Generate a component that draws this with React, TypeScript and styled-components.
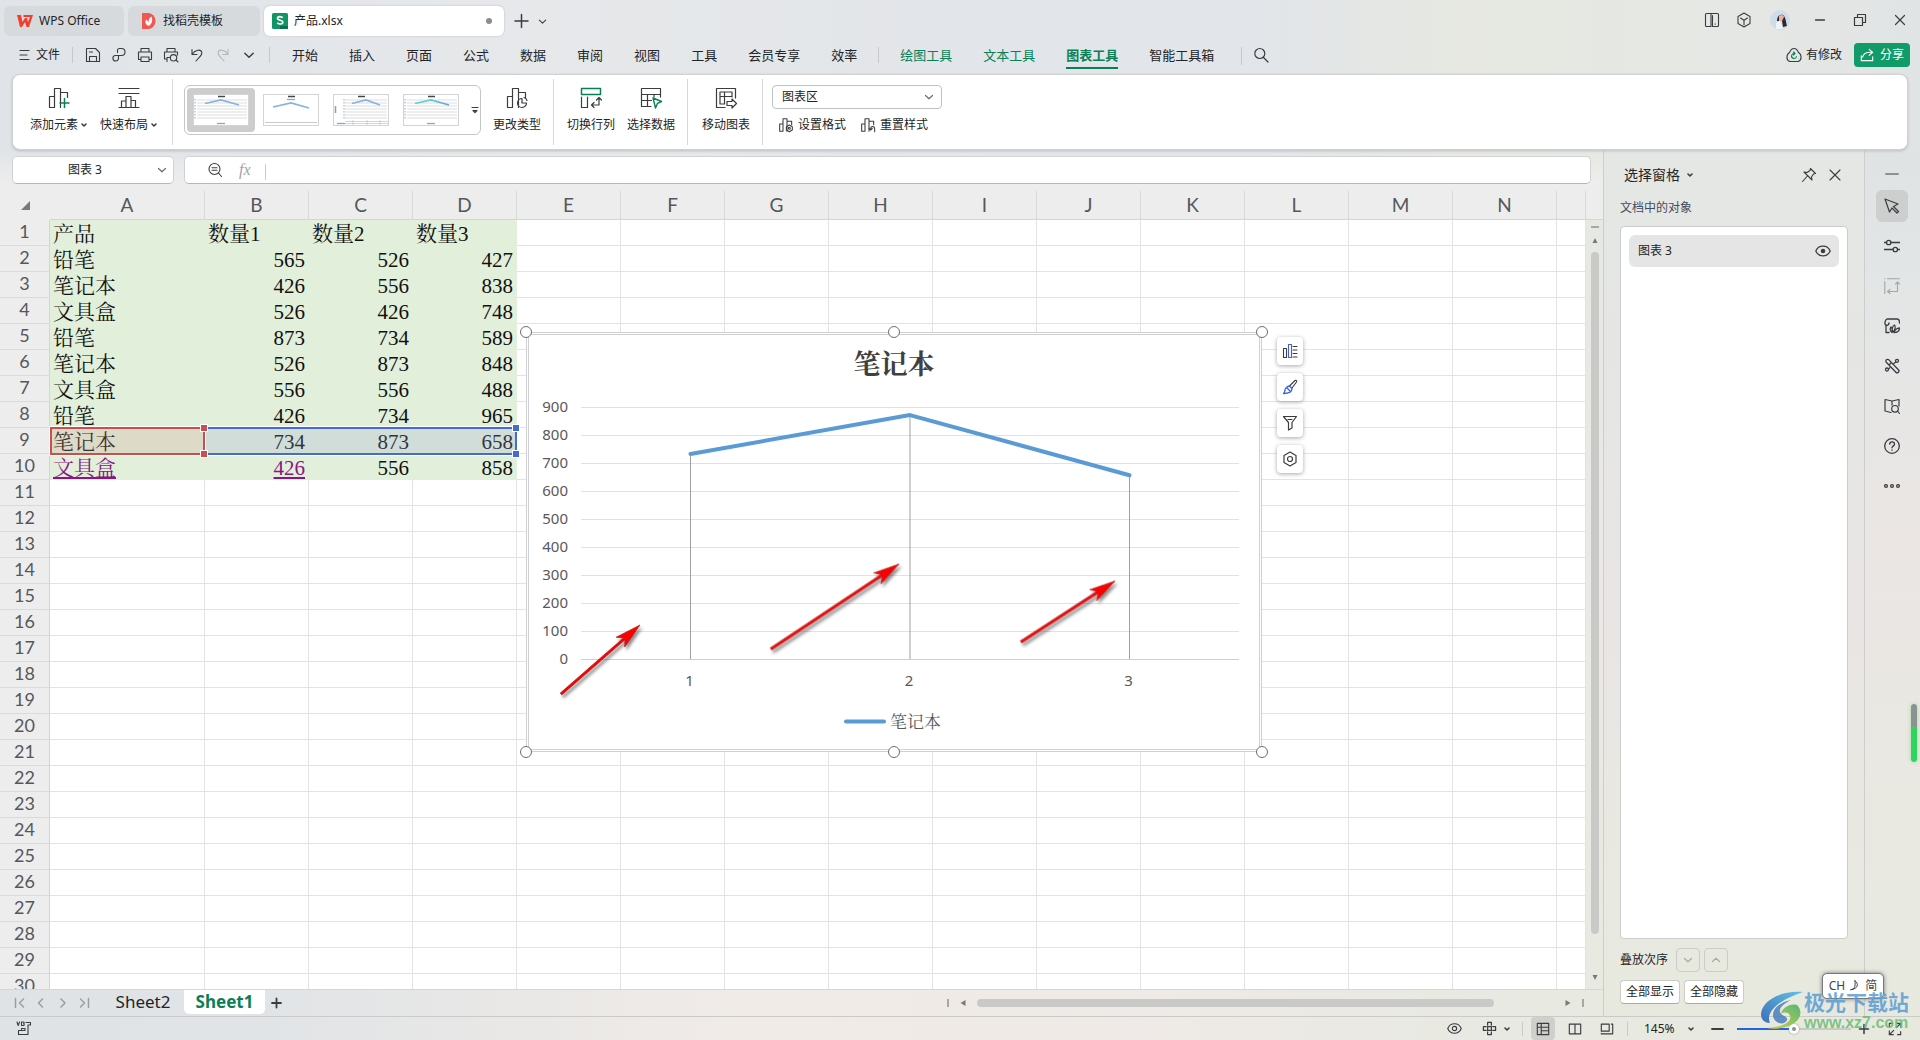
import React from "react";
import styled, { createGlobalStyle, css } from "styled-components";

const ui = `"Noto Sans", "Noto Sans CJK SC", sans-serif`;
const song = `"Liberation Serif", "Noto Serif CJK SC", "Noto Sans CJK SC", serif`;
const green = "#0a7f56";
const ink = "#222426";
const topTint =
  "linear-gradient(90deg, #e0e4e8 0%, #e6e8ea 28%, #e2e5e9 52%, #e2e5e9 66%, #e6e8e1 76%, #e5e8e3 88%, #e1e4e5 100%)";
const bottomTint =
  "linear-gradient(90deg, #dfe3e6 0%, #e1e4e6 14%, #f0ebe7 38%, #f0eae7 55%, #e8e9e2 78%, #e7e9df 100%)";

const GlobalStyle = createGlobalStyle`
  *, *::before, *::after { box-sizing: border-box; }
  body { margin: 0; overflow: hidden; }
  button, input, select { font: inherit; color: inherit; margin: 0; }
  button { background: none; border: 0; padding: 0; }
`;

const Window = styled.div`
  position: relative;
  display: flex;
  flex-direction: column;
  height: 100vh;
  background: ${topTint};
  font: 12px/18px ${ui};
  color: ${ink};
  svg { display: block; flex: none; }
`;

/* ---------- icons ---------- */

interface IconProps {
  size?: number;
  box?: number;
  color?: string;
  stroke?: number;
  children: React.ReactNode;
}
const Icon = ({ size = 16, box = 16, color = "#3a3d40", stroke = 1.1, children }: IconProps) => (
  <svg width={size} height={size} viewBox={`0 0 ${box} ${box}`} fill="none" stroke={color}
    strokeWidth={stroke} strokeLinejoin="round" strokeLinecap="round" aria-hidden="true">
    {children}
  </svg>
);
const Chevron = ({ color = "#6b6e70", size = 10, up = false }: { color?: string; size?: number; up?: boolean }) => (
  <Icon size={size} box={10} color={color} stroke={1.2}>
    <path d={up ? "M1.5 6.5 5 3.2l3.5 3.3" : "M1.5 3.5 5 6.8l3.5-3.3"} />
  </Icon>
);
const Caret = () => (
  <Icon size={8} box={8} stroke={1.6}>
    <path d="M2 3 4 5 6 3" />
  </Icon>
);

/* ---------- title bar ---------- */

const TitleBar = styled.header`
  display: flex;
  flex: none;
  height: 40px;
  padding: 6px 0 0 4px;
`;
const TabStrip = styled.div`
  display: flex;
  gap: 4px;
  flex: 1;
`;
const DocTab = styled.button<{ $width: number; $active?: boolean }>`
  display: flex;
  align-items: center;
  gap: 6px;
  width: ${(p) => p.$width}px;
  height: 30px;
  padding: 0 12px 0 ${(p) => (p.$active ? 8 : 13)}px;
  border-radius: 6px;
  background: ${(p) => (p.$active ? "#fff" : "#d6dadd")};
  box-shadow: ${(p) => (p.$active ? "0 0 2px #b4b8bc" : "none")};
`;
const UnsavedDot = styled.span`
  width: 6px;
  height: 6px;
  margin-left: auto;
  border-radius: 50%;
  background: #8b8d90;
`;
const PlainButton = styled.button<{ $w?: number; $h?: number }>`
  display: flex;
  align-items: center;
  justify-content: center;
  flex: none;
  width: ${(p) => p.$w ?? 26}px;
  height: ${(p) => p.$h ?? 28}px;
`;

/* ---------- menu row ---------- */

const MenuRow = styled.nav`
  display: flex;
  flex: none;
  align-items: flex-start;
  height: 34px;
  padding: 3px 10px 0 16px;
`;
const FileButton = styled.button`
  display: flex;
  align-items: center;
  gap: 6px;
  height: 24px;
  padding-left: 2px;
`;
const Divider = styled.span<{ $l: number; $r: number; $h?: number }>`
  flex: none;
  width: 1px;
  height: ${(p) => p.$h ?? 16}px;
  margin: 4px ${(p) => p.$r}px 0 ${(p) => p.$l}px;
  background: #c5c9cb;
`;
const MenuGroup = styled.div`
  display: flex;
  gap: 31px;
`;
const MenuItem = styled.button<{ $green?: boolean; $active?: boolean }>`
  height: 26px;
  border-bottom: 2px solid transparent;
  font-size: 13px;
  line-height: 24px;
  white-space: nowrap;
  color: ${(p) => (p.$green || p.$active ? green : ink)};
  ${(p) => p.$active && css`font-weight: 700; border-bottom-color: ${green};`}
`;
const MenuEnd = styled.div`
  display: flex;
  align-items: center;
  gap: 12px;
  margin-left: auto;
`;
const StateButton = styled.button`
  display: flex;
  align-items: center;
  gap: 4px;
`;
const ShareButton = styled(StateButton)`
  gap: 6px;
  height: 24px;
  padding: 0 6px;
  border-radius: 4px;
  background: #109b69;
  color: #fff;
`;

/* ---------- ribbon ---------- */

const Ribbon = styled.section`
  display: flex;
  flex: none;
  align-items: flex-start;
  height: 76px;
  margin: 0 12px;
  padding-left: 15px;
  border: 1px solid #cfd2d3;
  border-radius: 8px;
  background: #fff;
  box-shadow: 0 1px 3px #b9bdbe;
  position: relative;
`;
const RibbonButton = styled.button<{ $w?: number }>`
  display: flex;
  flex-direction: column;
  align-items: center;
  gap: 6px;
  width: ${(p) => p.$w ?? 48}px;
  padding-top: 11px;
  white-space: nowrap;
`;
const RibbonLabel = styled.span`
  display: flex;
  align-items: center;
  gap: 2px;
`;
const RibbonGroup = styled.div<{ $gap: number; $l: number }>`
  display: flex;
  gap: ${(p) => p.$gap}px;
  padding-left: ${(p) => p.$l}px;
`;
const RibbonDivider = styled.span`
  width: 1px;
  height: 66px;
  margin: 4px 0 0 12px;
  background: #d6d7d8;
`;
const Gallery = styled.div`
  display: flex;
  gap: 2px;
  width: 297px;
  height: 50px;
  margin: 10px 0 0;
  padding: 2px;
  border: 1px solid #c3c5c6;
  border-radius: 6px;
`;
const Thumb = styled.button<{ $active?: boolean }>`
  display: grid;
  place-items: center;
  flex: none;
  width: 68px;
  height: 44px;
  border-radius: 4px;
  background: ${(p) => (p.$active ? "#cdcdcd" : "transparent")};
`;
const FormatTools = styled.div`
  display: flex;
  flex-direction: column;
  gap: 7px;
  padding: 10px 0 0 9px;
`;
const SelectWrap = styled.label`
  display: flex;
  align-items: center;
  width: 170px;
  height: 24px;
  padding-right: 7px;
  border: 1px solid #bfc1c2;
  border-radius: 4px;
  select {
    flex: 1;
    appearance: none;
    border: 0;
    background: none;
    padding: 0 9px;
    outline: 0;
  }
`;
const SmallTools = styled.div`
  display: flex;
  gap: 14px;
  padding-left: 6px;
`;

/* ---------- work area ---------- */

const Main = styled.main`
  display: flex;
  flex: 1;
  min-height: 0;
`;
const Book = styled.div`
  display: flex;
  flex-direction: column;
  flex: 1;
  min-width: 0;
`;
const FormulaRow = styled.div`
  display: flex;
  flex: none;
  gap: 10px;
  height: 41px;
  padding: 6px 12px 7px;
  background: linear-gradient(180deg, #ededed00 0%, #ededed 80%);
`;
const Field = styled.div<{ $w?: number }>`
  display: flex;
  align-items: center;
  ${(p) => (p.$w ? css`width: ${p.$w}px;` : css`flex: 1;`)}
  padding: 0 6px 0 ${(p) => (p.$w ? 0 : 17)}px;
  border: 1px solid #d0d3d3;
  border-bottom-color: #b5b8b8;
  border-radius: 5px;
  background: #fff;
  input {
    flex: 1;
    min-width: 0;
    border: 0;
    outline: 0;
    background: none;
    text-align: ${(p) => (p.$w ? "center" : "left")};
  }
`;
const Fx = styled.span`
  margin-left: 11px;
  font: italic 16px/18px "Liberation Serif", serif;
  color: #a2a4a6;
`;
const SheetArea = styled.div`
  display: flex;
  flex: 1;
  min-height: 0;
  background: #ededed;
  border-bottom: 1px solid #d5d7d7;
`;
const Canvas = styled.div`
  position: relative;
  flex: 1;
  min-width: 0;
  overflow: hidden;
`;
const Grid = styled.table`
  width: 100%;
  table-layout: fixed;
  border-collapse: separate;
  border-spacing: 0;
  background: #fff;
`;
const HeadCell = styled.th`
  height: 29px;
  padding: 0 0 1px;
  border-right: 1px solid #d9d9d9;
  border-bottom: 1px solid #d4d4d4;
  background: #ededed;
  font: 400 19px/26px Lato, sans-serif;
  color: #55585b;
`;
const Corner = styled(HeadCell)`
  border-right-color: #ededed;
  border-bottom-color: #ededed;
  svg { margin: 0 0 0 21px; }
`;
const RowHead = styled(HeadCell)`
  height: 26px;
  padding: 0 0 3px;
  border-right-color: #d4d4d4;
  border-bottom-color: #dadada;
  font-size: 18px;
  line-height: 22px;
`;
const Cell = styled.td<{ $filled?: boolean; $num?: boolean }>`
  height: 26px;
  padding: 4px 3px 0;
  border-right: 1px solid #e3e3e3;
  border-bottom: 1px solid #e3e3e3;
  font: 21px/21px ${song};
  color: #111;
  overflow: hidden;
  white-space: nowrap;
  text-align: ${(p) => (p.$num ? "right" : "left")};
  ${(p) => p.$filled && css`background: #e2efda; border-color: #e2efda;`}
  a {
    color: #8a1583;
    text-decoration: underline 2px;
    text-underline-offset: 2px;
  }
`;
const RangeBox = styled.div<{ $x: number; $w: number; $color: string; $tint: string }>`
  position: absolute;
  left: ${(p) => p.$x}px;
  top: 236px;
  width: ${(p) => p.$w}px;
  height: 28px;
  border: 2px solid ${(p) => p.$color};
  outline: 1px solid #fff;
  background: ${(p) => p.$tint};
  color: ${(p) => p.$color};
`;
const Grip = styled.i<{ $bottom?: boolean }>`
  position: absolute;
  width: 6px;
  height: 6px;
  right: -4px;
  ${(p) => (p.$bottom ? "bottom: -4px;" : "top: -4px;")}
  background: currentColor;
  outline: 1px solid #fff;
`;
const ChartFrame = styled.figure`
  position: absolute;
  left: 526px;
  top: 141px;
  width: 736px;
  height: 420px;
  margin: 0;
  background: #fff;
`;
const Handle = styled.i<{ $x: number; $y: number }>`
  position: absolute;
  left: ${(p) => p.$x}%;
  top: ${(p) => p.$y}%;
  width: 12px;
  height: 12px;
  margin: -6px;
  border: 1px solid #6c6e70;
  border-radius: 50%;
  background: #fff;
`;
const ChartTools = styled.div`
  position: absolute;
  left: 1277px;
  top: 146px;
  display: flex;
  flex-direction: column;
  gap: 8px;
`;
const ChartTool = styled(PlainButton)`
  border-radius: 4px;
  background: #fff;
  box-shadow: 0 1px 4px #a5a7aa;
`;
const VScroll = styled.div`
  display: flex;
  flex-direction: column;
  align-items: center;
  flex: none;
  width: 17px;
  margin-top: 28px;
  padding: 6px 0 7px;
  gap: 8px;
  border-top: 1px solid #d5d7d7;
  background: linear-gradient(180deg, #e6e8e2, #ebe9e5 50%, #e8e9e1);
`;
const Thumbbar = styled.span<{ $vertical?: boolean }>`
  flex: 1;
  border-radius: 4px;
  background: #c9cac8;
  ${(p) => (p.$vertical ? css`width: 8px; margin-bottom: 32px;` : css`height: 8px; margin-right: 60px;`)}
`;

/* ---------- sheet tabs ---------- */

const SheetBar = styled.div`
  display: flex;
  flex: none;
  height: 26px;
  padding-left: 8px;
  background: ${bottomTint};
  background-size: 100vw 100%;
`;
const SheetNav = styled.div`
  display: flex;
  padding-right: 6px;
`;
const SheetTab = styled.button<{ $active?: boolean }>`
  width: ${(p) => (p.$active ? 81 : 82)}px;
  height: 24px;
  border-radius: 0 0 5px 5px;
  font-size: 17px;
  line-height: 22px;
  ${(p) => p.$active && css`background: #fff; color: ${green}; font-weight: 700;`}
`;
const NavButton = styled(PlainButton)`
  width: 22px;
  height: 26px;
`;
const HScroll = styled.div`
  display: flex;
  align-items: center;
  gap: 10px;
  max-width: 656px;
  margin-left: auto;
  padding-right: 19px;
  flex: 1;
`;

/* ---------- selection pane ---------- */

const Pane = styled.aside`
  display: flex;
  flex-direction: column;
  flex: none;
  width: 261px;
  padding: 6px 16px 12px;
  border-left: 1px solid #cbcecd;
  background: linear-gradient(180deg, #e4e7e4 0%, #e6e6e4 35%, #e9e5e4 55%, #e8e9e1 85%, #e7e9df 100%);
`;
const PaneTitle = styled.div`
  display: flex;
  align-items: center;
  height: 38px;
  padding-left: 4px;
  h2 { margin: 0 6px 0 0; font: 400 14px/20px ${ui}; }
  button:first-of-type { margin-left: auto; }
`;
const PaneLabel = styled.div`
  color: #454a60;
  line-height: 28px;
`;
const ObjectList = styled.ul`
  flex: 1;
  margin: 4px 0 9px;
  padding: 8px;
  list-style: none;
  border: 1px solid #c9cdcd;
  border-radius: 4px;
  background: #fff;
`;
const ObjectItem = styled.li`
  display: flex;
  align-items: center;
  justify-content: space-between;
  height: 32px;
  padding: 0 8px 0 9px;
  border-radius: 6px;
  background: #e5e5e5;
`;
const PaneRow = styled.div`
  display: flex;
  align-items: center;
  gap: 4px;
  height: 24px;
  & + & { margin-top: 8px; }
`;
const OrderLabel = styled.span`
  width: 52px;
`;
const OrderButton = styled(PlainButton)`
  width: 24px;
  height: 24px;
  border: 1px solid #cbccc7;
  border-radius: 4px;
`;
const WhiteButton = styled.button`
  width: 60px;
  height: 24px;
  border: 1px solid #cbccc8;
  border-bottom-color: #aaaba7;
  border-radius: 4px;
  background: #fff;
`;
const Rail = styled.aside`
  flex: none;
  width: 56px;
  padding: 8px 12px 0 11px;
  border-left: 1px solid #cbcecd;
  background: linear-gradient(180deg, #dfe3e4 0%, #e4e6e6 20%, #ebe6e4 45%, #e8e9e1 85%, #e7e9df 100%);
`;
const RailButton = styled(PlainButton)<{ $on?: boolean; $tight?: boolean }>`
  width: 32px;
  height: 32px;
  margin-bottom: ${(p) => (p.$tight ? 0 : 8)}px;
  border-radius: 6px;
  background: ${(p) => (p.$on ? "#cdcfce" : "transparent")};
`;

/* ---------- status bar ---------- */

const StatusBar = styled.footer`
  display: flex;
  flex: none;
  align-items: center;
  justify-content: space-between;
  height: 24px;
  padding-left: 16px;
  border-top: 1px solid #c9cbcb;
  background: ${bottomTint};
`;
const StatusGroup = styled.div`
  display: flex;
  align-items: center;
`;
const EyeCare = styled(PlainButton)`
  gap: 6px;
  width: 52px;
  height: 22px;
`;
const ViewButton = styled(PlainButton)<{ $on?: boolean }>`
  width: 24px;
  height: 23px;
  border-radius: 4px;
  margin-right: 8px;
  background: ${(p) => (p.$on ? "#cfd0cb" : "transparent")};
`;
const StatusDivider = styled.span`
  width: 1px;
  height: 14px;
  background: #c8cac6;
  margin-right: 8px;
`;
const ZoomLabel = styled.label`
  width: 42px;
  padding-left: 8px;
`;
const ZoomRange = styled.input`
  width: 114px;
  height: 12px;
  margin: 0 7px;
  appearance: none;
  background: transparent;
  &::-webkit-slider-runnable-track {
    height: 2px;
    background: linear-gradient(90deg, #2463e0 50%, #c6c9c4 50%);
  }
  &::-webkit-slider-thumb {
    appearance: none;
    width: 10px;
    height: 10px;
    margin-top: -4px;
    border: 3px solid #fff;
    border-radius: 50%;
    background: #8c9092;
    box-shadow: 0 0 2px #888;
  }
`;

/* ---------- overlays ---------- */

const ImeBox = styled.div`
  position: absolute;
  right: 36px;
  bottom: 41px;
  display: flex;
  align-items: center;
  justify-content: center;
  gap: 4px;
  width: 62px;
  height: 26px;
  border: 1px solid #77797a;
  border-radius: 5px;
  background: #fff;
  box-shadow: 0 0 4px #777;
  color: #444;
`;
const Watermark = styled.div`
  position: absolute;
  right: 10px;
  bottom: 9px;
  display: flex;
  align-items: flex-end;
  gap: 1px;
  pointer-events: none;
`;
const MarkText = styled.div`
  display: flex;
  flex-direction: column;
  width: 106px;
  white-space: nowrap;
  b { font: 700 21px/26px ${ui}; color: #5b9cd3d9; }
  span { font: 700 16px/16px "Liberation Sans", sans-serif; color: #69bd74d9; }
`;
const Meter = styled.div`
  position: absolute;
  right: 3px;
  top: 704px;
  width: 6px;
  height: 58px;
  border-radius: 3px;
  background: linear-gradient(180deg, #8d9291 0 40%, #2fd45f 40% 100%);
  box-shadow: 0 0 4px #9adca9;
`;

/* ---------- data ---------- */

const columns = "ABCDEFGHIJKLMN".split("");
const records: (string | number)[][] = [
  ["产品", "数量1", "数量2", "数量3"],
  ["铅笔", 565, 526, 427],
  ["笔记本", 426, 556, 838],
  ["文具盒", 526, 426, 748],
  ["铅笔", 873, 734, 589],
  ["笔记本", 526, 873, 848],
  ["文具盒", 556, 556, 488],
  ["铅笔", 426, 734, 965],
  ["笔记本", 734, 873, 658],
  ["文具盒", 426, 556, 858],
];
const mainMenus = ["开始", "插入", "页面", "公式", "数据", "审阅", "视图", "工具", "会员专享", "效率"];
const toolMenus = ["绘图工具", "文本工具", "图表工具", "智能工具箱"];

const bars = <path d="M2.500 10.500h5v11h-5zM7.500 21.500v-19h6v19M13.500 6.500h7v5" />;

const ThumbChart = ({ kind }: { kind: number }) => (
  <svg width="56" height="32" viewBox="0 0 56 32" fill="none" aria-hidden="true">
    <rect x=".5" y=".5" width="55" height="31" fill="#fff" stroke="#d4d4d4" />
    <path d="M25 2.500h7" stroke="#444" strokeWidth="1.500" />
    {kind !== 1 && [6, 9, 12, 15, 18, 21, 24].map((y) => (
      <path key={y} d={`M${kind === 2 ? 12 : 4} ${y}H54`} stroke="#eeeeef" strokeWidth="2" />
    ))}
    {kind !== 1 && <path d={`M${kind === 2 ? 11 : 2} 5v21`} stroke="#8faad0" strokeDasharray="1.500 1.500" />}
    {kind === 1 && <path d="M2 28.500h52" stroke="#c8c8c8" />}
    {kind === 2 && <path d="M2.500 12v7" stroke="#99a" strokeWidth="1.500" />}
    {kind === 2 && <path d="M12 27.500h43M12 29.500h43M20 26v5M34 26v5M47 26v5" stroke="#bbb" strokeWidth=".6" />}
    <path d={kind === 1 ? "M10 13 28 9l18 5" : kind === 2 ? "M19 9.500 33 6l14 5" : "M12 9.500 28 6l18 5"}
      stroke={kind === 3 ? "url(#tealBlue)" : "#86b4e0"} strokeWidth="1.700" />
    <path d={kind === 1 ? "M24 5.500h8" : kind === 2 ? "M4 29.500h8" : "M24 29.500h8"} stroke="#7da7d5" strokeWidth="1.300" />
    <defs>
      <linearGradient id="tealBlue"><stop offset=".4" stopColor="#5fd0d0" /><stop offset="1" stopColor="#6aa0dd" /></linearGradient>
    </defs>
  </svg>
);

const Arrow = ({ x1, y1, x2, y2 }: { x1: number; y1: number; x2: number; y2: number }) => {
  const angle = (Math.atan2(y2 - y1, x2 - x1) * 180) / Math.PI;
  const length = Math.hypot(x2 - x1, y2 - y1);
  return (
    <g transform={`translate(${x1} ${y1}) rotate(${angle})`} stroke="#a01818" strokeWidth=".6" fill="#fb0404">
      <path d={`M0 -1.200H${length - 21}L${length - 26} -6.500 ${length} 0 ${length - 26} 6.500 ${length - 21} 1.200H0z`} />
    </g>
  );
};

const LineChart = () => {
  const values = [734, 873, 658];
  const y = (v: number) => 327.5 - (v * 252) / 900;
  const x = (i: number) => 164.5 + i * 219.5;
  return (
    <svg width="736" height="420" viewBox="0 0 736 420" role="img" aria-label="笔记本">
      <defs>
        <filter id="shade" x="-20%" y="-20%" width="150%" height="150%">
          <feDropShadow dx="2" dy="3" stdDeviation="1.500" floodColor="#333" floodOpacity=".55" />
        </filter>
      </defs>
      <path d="M.5.500h735v419H.5zM2.500 2.500h731v415H2.500z" fill="none" stroke="#cfd0d3" />
      <text x="368" y="42" textAnchor="middle" fontFamily={song} fontWeight="700" fontSize="27" fill="#404040">笔记本</text>
      <g fontFamily={ui} fontSize="15" fill="#595959">
        {Array.from({ length: 10 }, (_, i) => (
          <React.Fragment key={i}>
            <path d={`M55 ${327.5 - i * 28}H713`} stroke={i ? "#e1e1e1" : "#cfcfcf"} />
            <text x="42" y={332 - i * 28} textAnchor="end">{i * 100}</text>
          </React.Fragment>
        ))}
        {values.map((v, i) => (
          <React.Fragment key={i}>
            <path d={`M${x(i)} ${y(v)}V327`} stroke="#a0a0a0" />
            <text x={x(i) - 1} y="354" textAnchor="middle">{i + 1}</text>
          </React.Fragment>
        ))}
      </g>
      <polyline points={values.map((v, i) => `${x(i)},${y(v)}`).join(" ")} fill="none" stroke="#5b9bd5" strokeWidth="4" strokeLinecap="round" strokeLinejoin="round" />
      <path d="M320 389.500H358" stroke="#5b9bd5" strokeWidth="4" strokeLinecap="round" />
      <text x="364" y="396" fontFamily={song} fontSize="17" fill="#595959">笔记本</text>
      <g filter="url(#shade)">
        <Arrow x1={35} y1={362} x2={114} y2={293} />
        <Arrow x1={245} y1={317} x2={373} y2={232} />
        <Arrow x1={495} y1={310} x2={589} y2={249} />
      </g>
    </svg>
  );
};

const Worksheet = () => (
  <Grid>
    <colgroup>
      <col style={{ width: 50 }} />
      <col style={{ width: 155 }} />
      {columns.slice(1).map((c) => <col key={c} style={{ width: 104 }} />)}
      <col />
    </colgroup>
    <thead>
      <tr>
        <Corner aria-label="全选"><svg width="9" height="10"><path d="M0 10 9 1v9z" fill="#77797b" /></svg></Corner>
        {columns.map((c) => <HeadCell key={c} scope="col">{c}</HeadCell>)}
        <HeadCell />
      </tr>
    </thead>
    <tbody>
      {Array.from({ length: 30 }, (_, r) => (
        <tr key={r}>
          <RowHead scope="row">{r + 1}</RowHead>
          {Array.from({ length: columns.length + 1 }, (_, c) => {
            const value = records[r]?.[c];
            const linked = r === 9 && c < 2;
            return (
              <Cell key={c} $filled={value !== undefined} $num={typeof value === "number"}>
                {linked ? <a href="#sheet">{value}</a> : value}
              </Cell>
            );
          })}
        </tr>
      ))}
    </tbody>
  </Grid>
);

const Tri = ({ d }: { d: string }) => (
  <svg width="8" height="8" viewBox="0 0 8 8" aria-hidden="true"><path d={d} fill="#77797b" /></svg>
);

export default function App() {
  return (
    <Window>
      <GlobalStyle />
      <TitleBar>
        <TabStrip>
          <DocTab $width={120}>
            <svg width="16" height="14" viewBox="0 0 16 14" fill="none" aria-hidden="true">
              <path d="M0 1h4l1.500 7L8 4h2l1 4 2-5H6.500V1H16l-4 12h-2.500L8 8l-3 5H3z" fill="#f0402f" />
            </svg>
            WPS Office
          </DocTab>
          <DocTab $width={132}>
            <svg width="16" height="16" viewBox="0 0 16 16" aria-hidden="true">
              <path d="M1 0h6a7.500 8 0 0 1 0 16H1z" fill="#f15653" />
              <path d="M7.500 13C4 11 4 9 5 6.500 7 8 7.500 9 7.500 10c0-3 .5-5 3-6.500C12 8 11 11 7.500 13z" fill="#fff" />
            </svg>
            找稻壳模板
          </DocTab>
          <DocTab $width={240} $active>
            <svg width="16" height="16" viewBox="0 0 16 16" aria-hidden="true">
              <rect width="16" height="16" rx="1.500" fill="#119566" />
              <path d="M8 13h8v3H8z" fill="#0b6f4b" />
              <path d="M10.800 4.800C9.500 3.200 5.500 3 5.500 5.300c0 2.500 5.300 1.500 5.300 4 0 2.200-4 2.200-5.500.4" fill="none" stroke="#fff" strokeWidth="1.700" />
            </svg>
            产品.xlsx
            <UnsavedDot />
          </DocTab>
          <PlainButton aria-label="新建" $h={30}><Icon stroke={1.500}><path d="M8.500 1.500v13M2 8h13" /></Icon></PlainButton>
          <PlainButton aria-label="更多标签" $w={8} $h={30}><Chevron size={9} color="#3a3d40" /></PlainButton>
        </TabStrip>
        <PlainButton aria-label="分屏" $w={32}><Icon><path d="M2.500 1.500H7v13H2.500a1 1 0 0 1-1-1v-11a1 1 0 0 1 1-1M8.500 3.500v11h5a1 1 0 0 0 1-1v-11a1 1 0 0 0-1-1H7M11 12h.5" /></Icon></PlainButton>
        <PlainButton aria-label="应用" $w={32}><Icon><path d="M8 1l6 3.500v7L8 15l-6-3.500v-7zM4.500 6 8 8.200 11.500 6M8 8.200V13" /></Icon></PlainButton>
        <PlainButton aria-label="账户" $w={40}>
          <svg width="20" height="20" viewBox="0 0 20 20" aria-hidden="true">
            <circle cx="10" cy="10" r="10" fill="#cfdde8" />
            <path d="M7 11c0-5 3-7 6-6 3 2 3 8 4 11l-4 1-1-6z" fill="#33272d" />
            <path d="M9 6c2-2 5-1 5 1l-2 4H9z" fill="#e3b3a9" /><path d="M6 13l4-2 3 8H6z" fill="#eef4f9" />
          </svg>
        </PlainButton>
        <PlainButton aria-label="最小化" $w={40}><Icon stroke={1.300}><path d="M3.500 8h9" /></Icon></PlainButton>
        <PlainButton aria-label="还原" $w={40}><Icon stroke={1.200}><path d="M2.500 5.500h8v8h-8zM5.500 5.500v-3h8v8h-3" /></Icon></PlainButton>
        <PlainButton aria-label="关闭" $w={40}><Icon stroke={1.200}><path d="m3.500 3.500 9 9m0-9-9 9" /></Icon></PlainButton>
      </TitleBar>

      <MenuRow>
        <FileButton>
          <Icon size={12} box={12}><path d="M2 1.500h9M2 6h7M2 10.500h9" /></Icon>
          文件
        </FileButton>
        <Divider $l={12} $r={7} />
        <PlainButton aria-label="保存" $h={24}><Icon><path d="M1.500 1.500h9l4 4v9h-13zM4.500 5h3M4.500 14.500v-5h7v5" /></Icon></PlainButton>
        <PlainButton aria-label="输出" $h={24}><Icon><path d="M6.500 5.500v-2a2 2 0 0 1 2-2h2a3.500 3.500 0 0 1 0 7H4a2.800 2.800 0 1 0 3.500 3V8.500" /></Icon></PlainButton>
        <PlainButton aria-label="打印" $h={24}><Icon><path d="M4 5V1.500h8V5M4 12.500H1.500V5h13v7.500H12M4 10h8v4.500H4z" /></Icon></PlainButton>
        <PlainButton aria-label="打印预览" $h={24}><Icon><path d="M4 5V1.500h8V5M4 14.500v-4h3M4 12H1.500V5h13v3" /><circle cx="10.500" cy="10.800" r="3.200" /><path d="m13 13 2 2" /></Icon></PlainButton>
        <PlainButton aria-label="撤销" $h={24}><Icon><path d="M3 2.500v5h5M3.300 7C6 3 12 1.500 12.800 5.500c.5 3-3 5-5.800 8.500" /></Icon></PlainButton>
        <PlainButton aria-label="恢复" $h={24}><Icon color="#b3b6b9"><path d="M13 2.500v5H8M12.700 7C10 3 4 1.500 3.200 5.500c-.5 3 3 5 5.800 8.500" /></Icon></PlainButton>
        <PlainButton aria-label="更多命令" $h={24}><Chevron size={12} color="#3a3d40" /></PlainButton>
        <Divider $l={7} $r={22} />
        <MenuGroup>{mainMenus.map((m) => <MenuItem key={m}>{m}</MenuItem>)}</MenuGroup>
        <Divider $l={21} $r={21} />
        <MenuGroup>
          {toolMenus.map((m, i) => <MenuItem key={m} $green={i < 3} $active={i === 2}>{m}</MenuItem>)}
        </MenuGroup>
        <Divider $l={27} $r={6} $h={18} />
        <PlainButton aria-label="搜索" $h={24}><Icon stroke={1.200}><circle cx="6.800" cy="6.500" r="5" /><path d="m10.500 10.500 4.500 4.500" /></Icon></PlainButton>
        <MenuEnd>
          <StateButton>
            <Icon><path d="M8 1.500c2 0 3.500 1.500 4.500 4 3.500 2 3.500 8-.5 9H4c-4-1-4-7-.5-9 1-2.500 2.500-4 4.500-4z" /><path d="M10.500 9.500a2.500 2.500 0 1 1-2-3M7.500 5l1.500 1.500L7.500 8" stroke={green} /></Icon>
            有修改
          </StateButton>
          <ShareButton>
            <Icon size={14} color="#fff" stroke={1.300}><path d="M1.500 9v5.500h13V10M10.500 1.500l4 3.500-4 3.500M14 5C8 4.500 4 6 3 10.500" /></Icon>
            分享
          </ShareButton>
        </MenuEnd>
      </MenuRow>

      <Ribbon>
        <RibbonGroup $gap={8} $l={0}>
          <RibbonButton $w={62}>
            <Icon size={24} box={24} stroke={1.200}>{bars}<path d="M17.500 12.500v9M13 17h9" stroke={green} strokeWidth="1.500" /></Icon>
            <RibbonLabel>添加元素<Caret /></RibbonLabel>
          </RibbonButton>
          <RibbonButton $w={62}>
            <Icon size={24} box={24} stroke={1.200}><path d="M2 2.500h20M2 7.500h20M2 21.500h20M4.500 21v-6H9v6M9 15v-4.500h5V21M14 14.500h4.500V21" /></Icon>
            <RibbonLabel>快速布局<Caret /></RibbonLabel>
          </RibbonButton>
        </RibbonGroup>
        <RibbonDivider />
        <RibbonGroup $gap={12} $l={11}>
          <Gallery>
            {[0, 1, 2, 3].map((k) => (
              <Thumb key={k} $active={k === 0} aria-label={`样式 ${k + 1}`}><ThumbChart kind={k} /></Thumb>
            ))}
            <PlainButton aria-label="更多样式" $w={16} $h={44}><Icon size={8} box={8} stroke={1.200}><path d="M1 1.500h6M2 4.500h4L4 6.500z" /></Icon></PlainButton>
          </Gallery>
          <RibbonButton>
            <Icon size={24} box={24} stroke={1.200}>{bars}<path d="M17 12.500a4.500 4.500 0 1 0 4.500 4.500H17zM19 11.500a4 4 0 0 1 3 3" /></Icon>
            <RibbonLabel>更改类型</RibbonLabel>
          </RibbonButton>
        </RibbonGroup>
        <RibbonDivider />
        <RibbonGroup $gap={12} $l={13}>
          <RibbonButton>
            <Icon size={24} box={24} stroke={1.200}><path d="M2.500 2.500h19v6h-19z" stroke={green} strokeWidth="1.500" /><path d="M2.500 11v10.500h6V11M13 19h7v-7M17.500 14 20 11.500l2.500 2.500M15 16.500 12.500 19l2.500 2.500" /></Icon>
            <RibbonLabel>切换行列</RibbonLabel>
          </RibbonButton>
          <RibbonButton>
            <Icon size={24} box={24} stroke={1.200}><path d="M12 20.500H2.500v-18h19V11M2.500 8.500h19M2.500 14.500h10M8.500 8.500v12M15 8.500V11" /><path d="m14 12 8.500 3.500-4 1.800L16.500 22z" stroke={green} strokeWidth="1.400" /></Icon>
            <RibbonLabel>选择数据</RibbonLabel>
          </RibbonButton>
        </RibbonGroup>
        <RibbonDivider />
        <RibbonGroup $gap={12} $l={14}>
          <RibbonButton>
            <Icon size={24} box={24} stroke={1.200}><path d="M11 21.500H2.500v-19h19V12M6 18V6h12v5M6 10.500h12M10.500 6v12H6M13 15.500h5V13l4.500 4.500L18 22v-2.500h-5z" /></Icon>
            <RibbonLabel>移动图表</RibbonLabel>
          </RibbonButton>
        </RibbonGroup>
        <RibbonDivider />
        <FormatTools>
          <SelectWrap>
            <select aria-label="图表元素"><option>图表区</option></select>
            <Chevron />
          </SelectWrap>
          <SmallTools>
            <StateButton>
              <Icon box={24} stroke={1.600}>{bars}<path d="m17 12 4.500 2.500v5L17 22l-4.500-2.500v-5z" /><circle cx="17" cy="17" r="1.500" /></Icon>
              设置格式
            </StateButton>
            <StateButton>
              <Icon box={24} stroke={1.600}>{bars}<path d="M16 18c0-5 6-5 6 0v4M13.500 17l2.500 2.500 2.500-2.500" /></Icon>
              重置样式
            </StateButton>
          </SmallTools>
        </FormatTools>
      </Ribbon>

      <Main>
        <Book>
          <FormulaRow>
            <Field $w={162}>
              <input aria-label="名称框" defaultValue="图表 3" />
              <Chevron />
            </Field>
            <Field>
              <PlainButton aria-label="查找"><Icon><circle cx="7.500" cy="7" r="5.500" /><path d="m11.500 11 3 3.500M5 5.800h5M5 8.200h5" /></Icon></PlainButton>
              <Fx>fx</Fx>
              <Divider $l={14} $r={6} />
              <input aria-label="编辑栏" />
            </Field>
          </FormulaRow>
          <SheetArea>
            <Canvas>
              <Worksheet />
              <RangeBox $x={204} $w={313} $color="#436bd0" $tint="#97a4d23d">
                <Grip /><Grip $bottom />
              </RangeBox>
              <RangeBox $x={50} $w={155} $color="#c94f4f" $tint="#cd9c8b3d">
                <Grip /><Grip $bottom />
              </RangeBox>
              <ChartFrame>
                <LineChart />
                {[0, 50, 100].flatMap((x) => [0, 100].map((y) => <Handle key={`${x}-${y}`} $x={x} $y={y} />))}
              </ChartFrame>
              <ChartTools>
                <ChartTool aria-label="图表元素"><Icon><path d="M1.500 5.500h3v9h-3zM11 3.500h4M11 7h4M11 10.500h4M11 14h4" /><path d="M6.500 1.500h3v13h-3z" stroke="#3c62d8" /></Icon></ChartTool>
                <ChartTool aria-label="图表样式"><Icon><path d="M7.500 7 13 1.500c1.500-.5 2 .5 1.500 1.500L10 9" /><path d="M7.500 7 10 9.500c0 3-3 5-8.500 5 2-1.500 1-3 2-5 1-1.500 2.500-2.500 4-2.500M5 9l3 3" stroke="#3c62d8" strokeWidth="1.300" /></Icon></ChartTool>
                <ChartTool aria-label="图表筛选器"><Icon stroke={1.200}><path d="M1.500 1.500h13L10 7.500v5.500l-3.500 2V7.500zM6 4.500h4" /></Icon></ChartTool>
                <ChartTool aria-label="设置图表格式"><Icon stroke={1.200}><path d="M8 1l6 3.500v7L8 15l-6-3.500v-7z" /><circle cx="8" cy="8" r="2.500" /></Icon></ChartTool>
              </ChartTools>
            </Canvas>
            <VScroll>
              <svg width="8" height="2"><path d="M0 1h8" stroke="#a6a8a8" strokeWidth="2" /></svg>
              <Tri d="M1.500 7 4 2l2.500 5z" />
              <Thumbbar $vertical />
              <Tri d="M1.500 1 4 6l2.500-5z" />
            </VScroll>
          </SheetArea>
          <SheetBar>
            <SheetNav>
              <NavButton aria-label="第一张"><Icon size={12} box={12} color="#9b9ea0" stroke={1.500}><path d="M2.500 1.500v9M10.500 2 6.500 6l4 4" /></Icon></NavButton>
              <NavButton aria-label="上一张"><Icon size={12} box={12} color="#9b9ea0" stroke={1.500}><path d="M7.500 2 3.500 6l4 4" /></Icon></NavButton>
              <NavButton aria-label="下一张"><Icon size={12} box={12} color="#9b9ea0" stroke={1.500}><path d="m4 2 4 4-4 4" /></Icon></NavButton>
              <NavButton aria-label="最后一张"><Icon size={12} box={12} color="#9b9ea0" stroke={1.500}><path d="M9.500 1.500v9M1.500 2l4 4-4 4" /></Icon></NavButton>
            </SheetNav>
            <SheetTab>Sheet2</SheetTab>
            <SheetTab $active>Sheet1</SheetTab>
            <NavButton aria-label="新建工作表"><Icon size={12} box={12} stroke={1.800}><path d="M6.500 1.500v9M2 6h9" /></Icon></NavButton>
            <HScroll>
              <svg width="2" height="8"><path d="M1 0v8" stroke="#a6a8a8" strokeWidth="2" /></svg>
              <Tri d="M6.500 1 1.500 4l5 3z" />
              <Thumbbar />
              <Tri d="M1.500 1 6.500 4l-5 3z" />
              <svg width="2" height="8"><path d="M1 0v8" stroke="#a6a8a8" strokeWidth="2" /></svg>
            </HScroll>
          </SheetBar>
        </Book>

        <Pane>
          <PaneTitle>
            <h2>选择窗格</h2>
            <Caret />
            <PlainButton aria-label="固定"><Icon><path d="m9.500 1.500 5 5-2 .5-2 3 .5 3-8-8 3 .5 3-2zM6 9.500l-4.500 5" /></Icon></PlainButton>
            <PlainButton aria-label="关闭窗格"><Icon><path d="m3 3 10 10m0-10L3 13" /></Icon></PlainButton>
          </PaneTitle>
          <PaneLabel>文档中的对象</PaneLabel>
          <ObjectList>
            <ObjectItem>
              图表 3
              <Icon stroke={1.300}><path d="M.8 8C3.500 1.500 12.500 1.500 15.200 8c-2.700 6.500-11.700 6.500-14.400 0z" /><circle cx="8" cy="8" r="1.600" fill="#3a3d40" /></Icon>
            </ObjectItem>
          </ObjectList>
          <PaneRow>
            <OrderLabel>叠放次序</OrderLabel>
            <OrderButton aria-label="下移"><Chevron color="#a9aba8" /></OrderButton>
            <OrderButton aria-label="上移"><Chevron color="#a9aba8" up /></OrderButton>
          </PaneRow>
          <PaneRow>
            <WhiteButton>全部显示</WhiteButton>
            <WhiteButton>全部隐藏</WhiteButton>
          </PaneRow>
        </Pane>

        <Rail>
          <RailButton $tight aria-label="收起"><Icon color="#8f9293" stroke={2}><path d="M2 8h12" /></Icon></RailButton>
          <RailButton $on aria-label="选择"><Icon stroke={1.200}><path d="m1 1 13 5-4.500 2.500 5 5-1.500 1.500-5-5L5.500 14z" /></Icon></RailButton>
          <RailButton aria-label="属性"><Icon stroke={1.300}><path d="M0 4.500h2.500M7 4.500h9M0 11.500h9M13.500 11.500H16" /><circle cx="4.700" cy="4.500" r="2.200" /><circle cx="11.300" cy="11.500" r="2.200" /></Icon></RailButton>
          <RailButton aria-label="转置"><Icon color="#a3a5a6"><path d="M.8.800h.2M3.500.800H15.500M.8 3.500v12M5 13.500h8.500V4M11.500 6l2-2 2 2M6 11.500l-2.500 2 2.500 2" /></Icon></RailButton>
          <RailButton aria-label="素材"><Icon stroke={1.300}><path d="M2 7v7.500h3M2 7.500C0 6 1 2 3 1h10c2 0 2.500 2 2.500 4M5 5c0 2-1.500 2.500-3 2.500M8 14.500C5.500 13 6 10 7 9c2 2 1.500 4 1 5.500 0-5 1-7 2.500-7.500 1.500 3 0 6-2.500 7.500M10 14.500c0-2 3-4.500 5.500-4.500 0 3-2 4.500-5.500 4.500" /></Icon></RailButton>
          <RailButton aria-label="美化"><Icon stroke={1.300}><path d="M2.300 4.300a1.700 1.700 0 0 1 2.600-2.400l9.500 9.900a1.700 1.700 0 0 1-2.500 2.500zM5 7l2.500-2.500" /><circle cx="13" cy="2.800" r="1.500" /><circle cx="3" cy="11.500" r="1.500" /><path d="m9.800 5.500 2-1.500M5 10.500l.8-.7" /></Icon></RailButton>
          <RailButton aria-label="查阅"><Icon stroke={1.200}><path d="M7 14.500 1 13V1.500L8 3l7-1.500V8M8 3v4" /><circle cx="11" cy="10.800" r="3.300" /><path d="m13.500 13 2 2.500" /></Icon></RailButton>
          <RailButton aria-label="帮助"><Icon stroke={1.300}><circle cx="8" cy="8" r="7.300" /><path d="M5.700 6.200c0-3 4.800-3 4.800 0C10.500 8 8 7.800 8 9.800M8 12v.3" /></Icon></RailButton>
          <RailButton aria-label="更多"><Icon stroke={1.300}><circle cx="2" cy="8" r="1.400" /><circle cx="8" cy="8" r="1.400" /><circle cx="14" cy="8" r="1.400" /></Icon></RailButton>
        </Rail>
      </Main>

      <StatusBar>
        <PlainButton aria-label="宏" $w={16} $h={22}><Icon><path d="m1 1 1.200 3.500L3.500 1M5.500 1v3.500h2c1 0 1-1.500 0-1.700 1-.3.800-1.800 0-1.800zM10 1.500h4.500V4H12v9.500H2.500v-4H9v-2H5.500v2" /></Icon></PlainButton>
        <StatusGroup>
          <PlainButton aria-label="阅读模式" $w={32} $h={22}><Icon size={15} stroke={1.200}><path d="M.8 8C3.500 1.200 12.500 1.200 15.200 8c-2.700 6.800-11.700 6.800-14.400 0z" /><circle cx="8" cy="8" r="2.300" /></Icon></PlainButton>
          <EyeCare aria-label="护眼模式">
            <Icon size={15} stroke={1.300}><path d="M6 4.500V1.500h4v3M6 11.500v3h4v-3M4.500 6h-3v4h3M11.500 6h3v4h-3M6 6h4v4H6z" /></Icon>
            <Caret />
          </EyeCare>
          <StatusDivider />
          <ViewButton $on aria-label="普通视图"><Icon size={14} stroke={1.300}><path d="M1.500 1.500h13v13h-13zM1.500 6h13M6 1.500v13M6 10h8" /></Icon></ViewButton>
          <ViewButton aria-label="分页预览"><Icon size={14} stroke={1.300}><path d="M1.500 2.500h13v11h-13zM8 2.500v11" /></Icon></ViewButton>
          <ViewButton aria-label="页面布局"><Icon size={14} stroke={1.300}><path d="M1.500 2.500h9v8h-9zM13 2.500h1.500v11h-13V13" /></Icon></ViewButton>
          <StatusDivider />
          <ZoomLabel htmlFor="zoom">145%</ZoomLabel>
          <PlainButton aria-label="缩放比例" $h={22}><Caret /></PlainButton>
          <PlainButton aria-label="缩小" $h={22}><Icon stroke={1.800}><path d="M3 8h11" /></Icon></PlainButton>
          <ZoomRange id="zoom" type="range" min={10} max={280} defaultValue={145} />
          <PlainButton aria-label="放大" $w={12} $h={22}><Icon size={12} stroke={2}><path d="M8 2v12M2 8h12" /></Icon></PlainButton>
          <PlainButton aria-label="全屏" $w={50} $h={22}><Icon size={14} stroke={1.300}><path d="M10 1.500h4.500V6M6 14.500H1.500V10M14 2l-4.500 4.500M2 14l4.500-4.500M1.500 5V1.500H5M14.500 11v3.500H11" /></Icon></PlainButton>
        </StatusGroup>
      </StatusBar>

      <ImeBox>CH<Icon size={12} stroke={1.300}><path d="M8 1c5 3 5 11-6 12 5-1 7-3 6-12z" /></Icon>简</ImeBox>
      <Watermark>
        <svg width="43" height="40" viewBox="0 0 43 40" aria-hidden="true">
          <defs>
            <linearGradient id="sky" x1="0" y1="1" x2="1" y2="0"><stop stopColor="#3c70b8" /><stop offset="1" stopColor="#62c0e6" /></linearGradient>
            <linearGradient id="leaf" x1="0" y1="1" x2="1" y2="0"><stop stopColor="#d8cf45" /><stop offset="1" stopColor="#55b873" /></linearGradient>
          </defs>
          <path d="M43 1C22-1 2 9 1 23c0 5 3 9 9 9-4-8 3-21 33-31z" fill="url(#sky)" />
          <path d="M13 24c0-7 8-13 18-15-8 4-12 8-11 12 1 4 8 4 7 8-1 3-5 4-8 3-3-1-6-4-6-8z" fill="#3f76ba" opacity=".8" />
          <path d="M37 14c8 8 2 20-16 23-5 1-10 1-14 0 18-1 27-8 22-14-2-2-6-2-8 0 1-6 9-11 16-9z" fill="url(#leaf)" />
        </svg>
        <MarkText><b>极光下载站</b><span>www.xz7.com</span></MarkText>
      </Watermark>
      <Meter />
    </Window>
  );
}
